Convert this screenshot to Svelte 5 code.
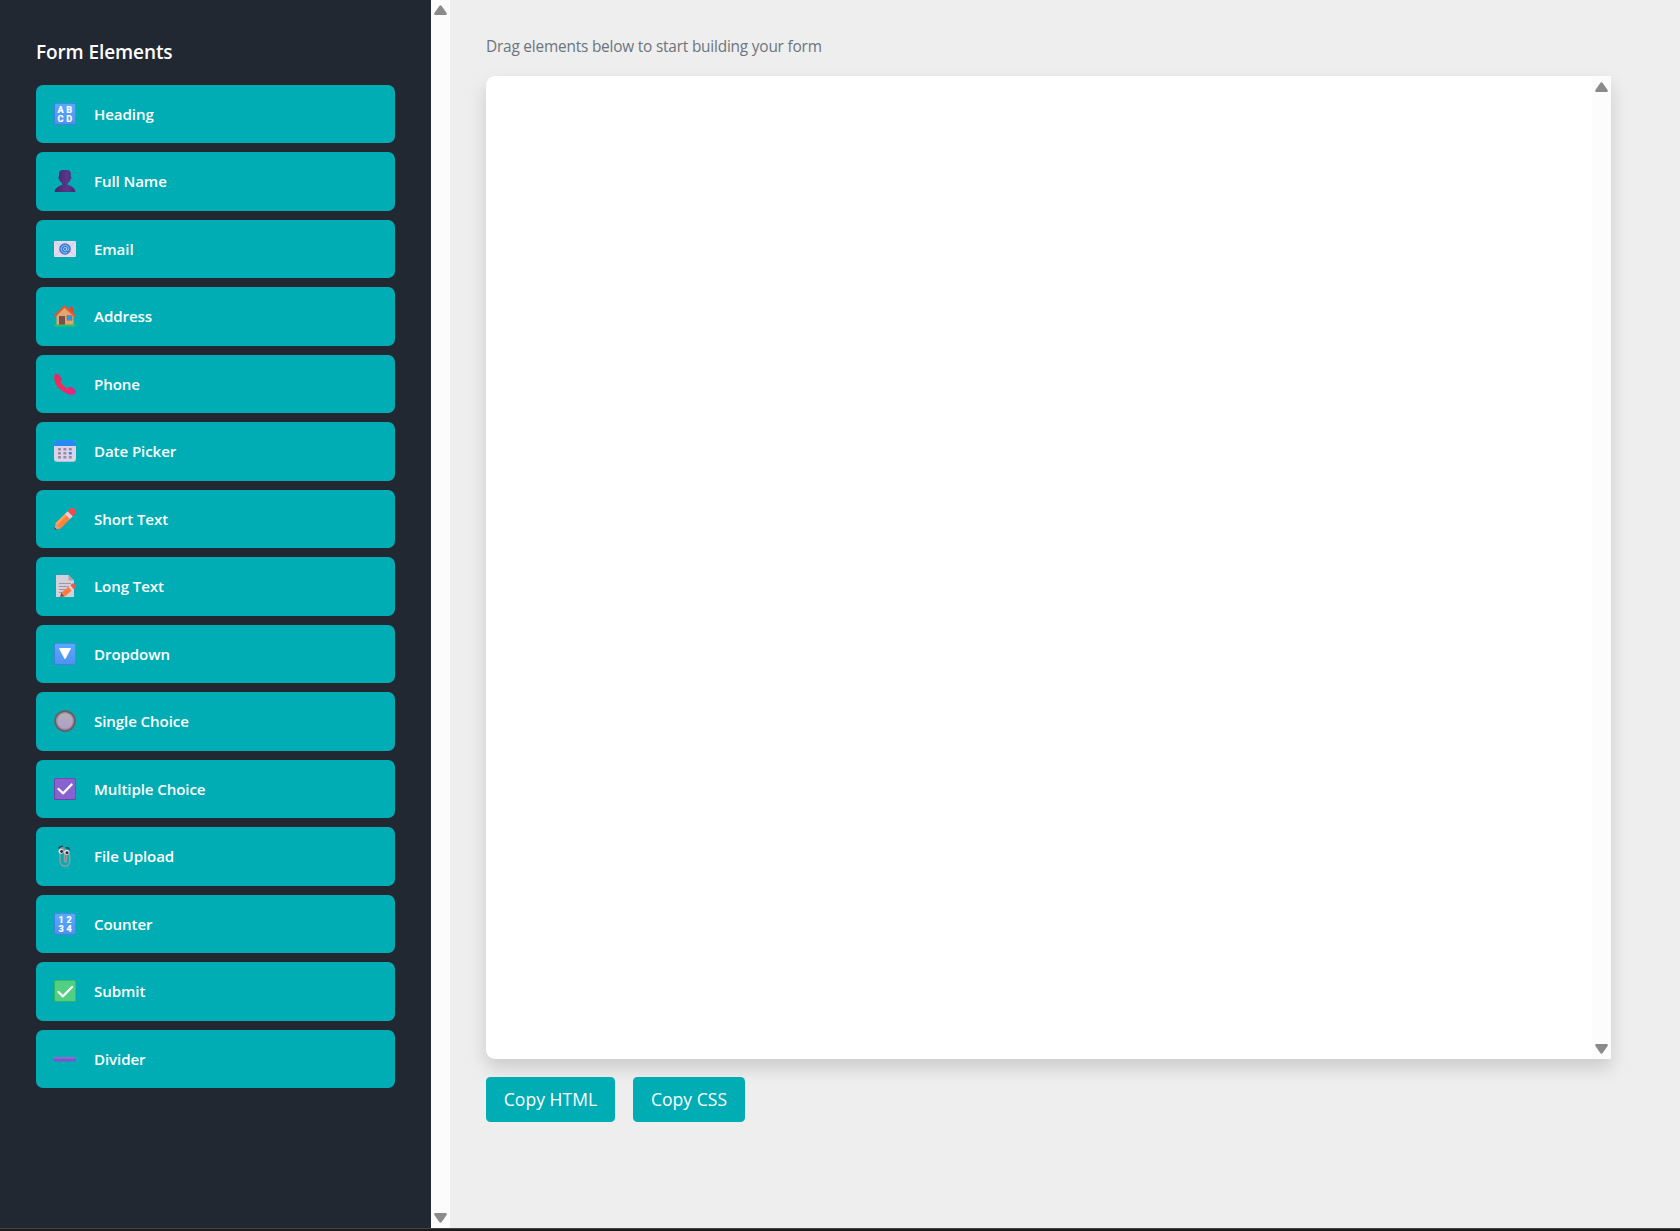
<script>
  const items = [
    { icon: 'abcd', label: 'Heading' },
    { icon: 'person', label: 'Full Name' },
    { icon: 'email', label: 'Email' },
    { icon: 'house', label: 'Address' },
    { icon: 'phone', label: 'Phone' },
    { icon: 'calendar', label: 'Date Picker' },
    { icon: 'pencil', label: 'Short Text' },
    { icon: 'memo', label: 'Long Text' },
    { icon: 'dropdown', label: 'Dropdown' },
    { icon: 'radio', label: 'Single Choice' },
    { icon: 'check', label: 'Multiple Choice' },
    { icon: 'clip', label: 'File Upload' },
    { icon: 'numbers', label: 'Counter' },
    { icon: 'submit', label: 'Submit' },
    { icon: 'divider', label: 'Divider' }
  ];
</script>

{#snippet tile(fill, edge)}
  <rect width="22" height="22" rx="1.6" fill={edge} />
  <rect x="1" y="0.7" width="20.3" height="20.3" rx="1.2" fill={fill} />
{/snippet}

{#snippet scrollbar()}
  <div class="scrollbar">
    <svg width="13" height="10" viewBox="0 0 13 10"><path d="M5.3 .9Q6.5-.5 7.7.9L12.6 8Q13.3 10 11.6 10H1.4Q-.3 10 .4 8Z" fill="#8b8b8b" /></svg>
    <svg width="13" height="10" viewBox="0 0 13 10"><path d="M5.3 9.1Q6.5 10.5 7.7 9.1L12.6 2Q13.3 0 11.6 0H1.4Q-.3 0 .4 2Z" fill="#8b8b8b" /></svg>
  </div>
{/snippet}

<div class="page">
  <div class="workspace">
    <aside>
      <h2><span>Form Elements</span></h2>
      <ul>
        {#each items as item}
          <li>
            <svg class="icon" viewBox="0 0 22 22">
              {#if item.icon === 'abcd' || item.icon === 'numbers'}
                {@render tile('url(#blue)', '#3f7fe0')}
                <g class="glyphs">
                  {#if item.icon === 'abcd'}
                    <text x="6.6" y="9.8">A</text><text x="15.2" y="9.8">B</text>
                    <text x="6.6" y="18.8">C</text><text x="15.2" y="18.8">D</text>
                  {:else}
                    <text x="7.2" y="9.8">1</text><text x="15" y="9.8">2</text>
                    <text x="7.2" y="18.8">3</text><text x="15" y="18.8">4</text>
                  {/if}
                </g>
              {:else if item.icon === 'person'}
                <path d="M0.6 22C1 18 5 15.8 8.3 15L8 13C6.2 11.8 5.4 10 5.2 8.9 4.2 8.5 4 7 5 6.5V4C5 1.5 6.3 0 9 0H13C15.7 0 16.8 1.5 16.8 4V6.5C17.9 7 17.6 8.5 16.6 8.9 16.4 10.5 15.5 12 13.8 13L13.6 15C17.5 15.8 21 18 21.4 22Z" fill="url(#violet)" />
              {:else if item.icon === 'email'}
                <rect y="3" width="22" height="16" fill="#e4daec" />
                <path d="M0 3L11 13 22 3M0 19L8 11M22 19L14 11" fill="none" stroke="#cbbedb" stroke-width=".8" />
                <circle cx="11" cy="11" r="5.8" fill="#367bd4" />
                <circle cx="11" cy="11" r="1.6" fill="none" stroke="#b6d2f8" stroke-width=".8" />
                <path d="M12.6 9.4V12Q14.6 13.5 14.8 10.8A3.8 3.8 0 1 0 13 14.3" fill="none" stroke="#b6d2f8" stroke-width=".8" />
              {:else if item.icon === 'house'}
                <path d="M16 2H19V8L16 6Z" fill="#d84a37" />
                <path d="M2.5 10L10.5 2 19.5 10V20H2.5Z" fill="#e0a66b" />
                <path d="M1 11L10.5 1.4 21 11" fill="none" stroke="#ea5335" stroke-width="2" stroke-linejoin="round" stroke-linecap="round" />
                <rect x="5" y="11" width="6" height="9" fill="#795052" />
                <rect x="13" y="10.5" width="5" height="4.7" fill="#209af0" stroke="#a86f50" stroke-width=".6" />
                <rect y="19.5" width="22" height="2" rx=".7" fill="#36bd5f" />
              {:else if item.icon === 'phone'}
                <path d="M1 1.4Q2.5-.3 4.2 1L7.8 5.5Q8.5 7 6.5 8.8 8.5 12.8 13 15.4L15.3 13.8Q16.6 13 18 14L21.5 17.5Q22.7 19 21 20.7 18.5 22.6 15 21.4 2.8 17 .4 7 -.6 3.2 1 1.4Z" fill="url(#phone)" />
                <path d="M4.2 1L7.8 5.5 6.3 7.5 3 3ZM16.6 13.7L21.5 17.5 20 19 15.4 15.5Z" fill="#bd3985" />
              {:else if item.icon === 'calendar'}
                <rect y=".3" width="22" height="21.5" rx="3" fill="#ddd3e9" />
                <path d="M0 6V3Q0 0 3 0H19Q22 0 22 3V6Z" fill="#258bf3" />
                {#each [8, 12, 16] as y, row}
                  {#each [4, 9.4, 14.8] as x, col}
                    <rect {x} {y} width="3" height="2.5" rx=".6" fill={row === 1 && col === 2 ? '#258bf3' : '#958ba6'} />
                  {/each}
                {/each}
              {:else if item.icon === 'pencil'}
                <g transform="translate(0 22) rotate(-45)">
                  <path d="M.5 0L6-3.6V3.6Z" fill="#dda182" />
                  <path d="M.5 0L2.5-1.4V1.4Z" fill="#55333e" />
                  <rect x="5.5" y="-3.6" width="14" height="7.2" fill="#ff8240" />
                  <rect x="5.5" y="-3.6" width="14" height="2.4" fill="#ffa454" />
                  <rect x="19" y="-3.6" width="4" height="7.2" fill="#e9cddd" />
                  <path d="M23-3.6H27Q29.5-3.6 29.5-1V1Q29.5 3.6 27 3.6H23Z" fill="#f44c48" />
                </g>
              {:else if item.icon === 'memo'}
                <path d="M2 0H14.5L20 5.5V22H2Z" fill="#d5cfdc" />
                <path d="M14.5 0V5.5H20Z" fill="#aaa3b3" />
                <path d="M5 8.5H17M5 11.5H15M5 14.5H11M5 17.5H8" stroke="#9d96a5" />
                <g transform="translate(6 22) rotate(-39)">
                  <path d="M0 0L4-2.5V2.5Z" fill="#81523f" />
                  <rect x="4" y="-2.6" width="9" height="5.2" fill="#ff7c3e" />
                  <rect x="13" y="-2.6" width="2.5" height="5.2" fill="#e9cddd" />
                  <rect x="15.5" y="-2.6" width="3.8" height="5.2" rx="1" fill="#f65745" />
                </g>
              {:else if item.icon === 'dropdown'}
                {@render tile('url(#blue)', '#3f7fe0')}
                <path d="M5.5 5.5H16.5L11 15.8Z" fill="#fff" stroke="#fff" stroke-linejoin="round" />
              {:else if item.icon === 'radio'}
                <circle cx="11" cy="11" r="9.8" fill="url(#silver)" stroke="#696067" stroke-width="2" />
                <circle cx="11" cy="11" r="8.3" fill="none" stroke="#938a91" />
              {:else if item.icon === 'check'}
                {@render tile('#8762d0', '#6f42a3')}
                <path d="M4.5 11L9.2 15.3 17.6 6.5" class="tick" />
              {:else if item.icon === 'submit'}
                {@render tile('#52cf83', '#31b565')}
                <path d="M4.5 12L9 16.3 18 7" class="tick" />
              {:else if item.icon === 'clip'}
                <path d="M6 9V16Q6.5 21 11 21.2 15.5 21 15.7 16V10.5Q15 7.5 12.5 9V16Q12 18.3 10.5 16V6Q9.8 2.2 7 3.2 5.7 4.2 6 9" fill="none" stroke="#97999c" stroke-width="1.4" />
                <circle cx="7" cy="6.3" r="2.5" fill="#e3dfe8" /><circle cx="12.8" cy="7.3" r="2.6" fill="#e3dfe8" />
                <circle cx="7.6" cy="6.5" r="1.4" fill="#30262b" /><circle cx="13" cy="7.7" r="1.5" fill="#30262b" />
                <path d="M4.6 3.4Q6 1 8.8 1.4M11.7 3Q14.3 2.1 15.6 4.5" fill="none" stroke="#39363a" stroke-width="1.3" />
              {:else}
                <rect y="9" width="22" height="4.6" rx="1" fill="#8053ce" />
                <rect y="9" width="22" height="1.4" rx=".7" fill="#986ccc" />
              {/if}
            </svg>
            <span>{item.label}</span>
          </li>
        {/each}
      </ul>
    </aside>
    {@render scrollbar()}
    <main>
      <p><span>Drag elements below to start building your form</span></p>
      <section>{@render scrollbar()}</section>
      <div class="actions">
        <button class="html"><span>Copy HTML</span></button>
        <button class="css"><span>Copy CSS</span></button>
      </div>
    </main>
  </div>
  <footer></footer>
</div>

<svg class="defs" width="0" height="0" aria-hidden="true">
  <defs>
    <linearGradient id="blue" x1="0" y1="0" x2="0" y2="1"><stop stop-color="#5ba9ff" /><stop offset="1" stop-color="#4f92ee" /></linearGradient>
    <linearGradient id="violet"><stop stop-color="#432467" /><stop offset=".6" stop-color="#5b368c" /><stop offset="1" stop-color="#482970" /></linearGradient>
    <linearGradient id="phone" x1="0" y1="0" x2="1" y2="1"><stop stop-color="#e72b55" /><stop offset=".5" stop-color="#f72c57" /><stop offset="1" stop-color="#dc2595" /></linearGradient>
    <linearGradient id="silver" x1="0" y1="0" x2="0" y2="1"><stop stop-color="#b6b1b9" /><stop offset="1" stop-color="#b09bc8" /></linearGradient>
  </defs>
</svg>

<style>
  :global(body) { margin: 0; overflow: hidden; }
  .page {
    display: flex;
    flex-direction: column;
    height: 1231px;
    font-family: 'Open Sans', 'Noto Sans', sans-serif;
    background: #eee;
  }
  .workspace { display: flex; height: 1228px; }
  footer { height: 2px; border-top: 1px solid #464646; background: #1b1b1b; }
  .defs { display: block; }
  aside {
    width: 431px;
    box-sizing: border-box;
    padding: 36px;
    background: #222831;
  }
  h2 {
    margin: 0;
    height: 48.75px;
    line-height: 33px;
    font-size: 19px;
    font-weight: 600;
    letter-spacing: -0.1px;
    color: #fff;
  }
  ul { margin: 0; padding: 0; list-style: none; display: grid; gap: 9px; }
  li {
    box-sizing: border-box;
    width: 359px;
    height: 58.5px;
    padding: 0 18px 0.6px;
    display: flex;
    align-items: center;
    gap: 18px;
    border-radius: 7px;
    background: #00adb5;
    color: #fff;
    font-size: 15.1px;
    font-weight: 600;
    line-height: 24px;
    letter-spacing: -0.1px;
  }
  .icon { width: 22px; height: 22px; overflow: hidden; flex: none; }
  .glyphs { font: 700 9.1px Roboto, sans-serif; letter-spacing: 0; text-anchor: middle; fill: #fff; stroke: #fff; stroke-width: 0.2px; }
  .tick { fill: none; stroke: #fff; stroke-width: 2.3; stroke-linecap: round; stroke-linejoin: round; }
  .scrollbar {
    width: 19px;
    box-sizing: border-box;
    padding: 5px 0;
    display: flex;
    flex-direction: column;
    justify-content: space-between;
    align-items: center;
    background: #fcfcfc;
  }
  section .scrollbar { padding-top: 6px; }
  main { padding: 34px 69px 0 36px; flex: 1; }
  p {
    margin: 0;
    height: 42px;
    line-height: 25px;
    font-size: 15.4px;
    letter-spacing: -0.2px;
    color: #6c757d;
  }
  section {
    height: 983px;
    display: flex;
    justify-content: flex-end;
    border-radius: 9px 0 0 9px;
    background: #fff;
    box-shadow: 0 9px 18px rgba(0, 0, 0, 0.15);
  }
  .actions { display: flex; gap: 18px; margin-top: 18px; position: relative; }
  button {
    height: 45px;
    padding: 0 0 2px;
    border: 0;
    border-radius: 4.5px;
    background: #00adb5;
    color: #fff;
    font-family: inherit;
    font-size: 17.5px;
    letter-spacing: 0.05px;
    white-space: nowrap;
  }
  .html { width: 129px; }
  .css { width: 112px; }
</style>
